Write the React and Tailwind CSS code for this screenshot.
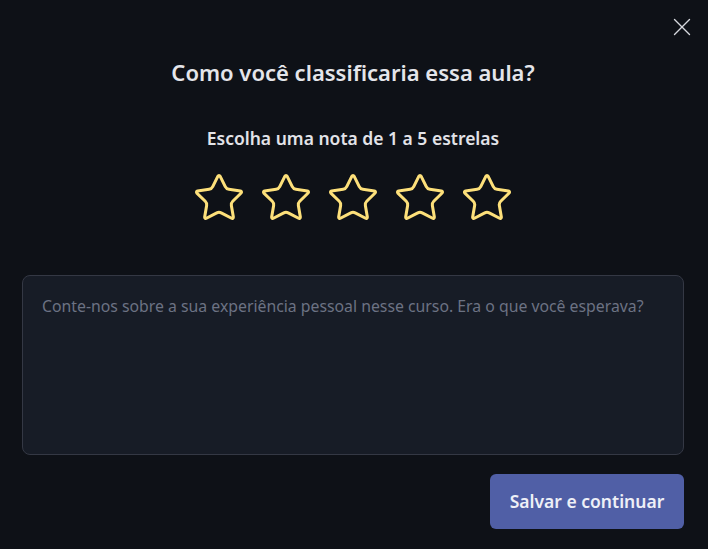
import { Star, X } from 'lucide-react';

export default function App() {
    return (
        <div className="relative flex h-[549px] w-[708px] flex-col bg-[#0e1117] pt-[57px] pr-[24px] pl-[22px] font-['Noto_Sans',sans-serif]">
            {/* botão fechar */}
            <button className="absolute top-[12px] left-[667px] text-[#d6d8de]">
                <X size={30} strokeWidth={1.1} />
            </button>

            <h2 className="text-center text-[22px] leading-[30px] font-semibold text-[#e4e5ea]">Como você classificaria essa aula?</h2>
            <p className="mt-[39px] text-center text-[17.5px] leading-[24px] font-semibold text-[#e2e3e8]">Escolha uma nota de 1 a 5 estrelas</p>

            <div className="mt-[21px] flex justify-center gap-[13px]">
                {[1, 2, 3, 4, 5].map((n) => (
                    <Star key={n} size={54} strokeWidth={1.35} className="text-[#fde07a]" />
                ))}
            </div>

            <textarea
                className="mt-[50px] h-[180px] w-full resize-none rounded-lg border border-[#343844] bg-[#171c26] px-[19px] py-[18px] text-[15.8px] leading-[24px] text-[#d0d3da] outline-none placeholder:text-[#6c7283]"
                placeholder="Conte-nos sobre a sua experiência pessoal nesse curso. Era o que você esperava?"
            />

            <div className="mt-[19px] flex justify-end">
                <button className="h-[55px] w-[194px] rounded-md bg-[#505fa6] text-[17.5px] font-semibold text-[#eef0f7]">Salvar e continuar</button>
            </div>
        </div>
    );
}
